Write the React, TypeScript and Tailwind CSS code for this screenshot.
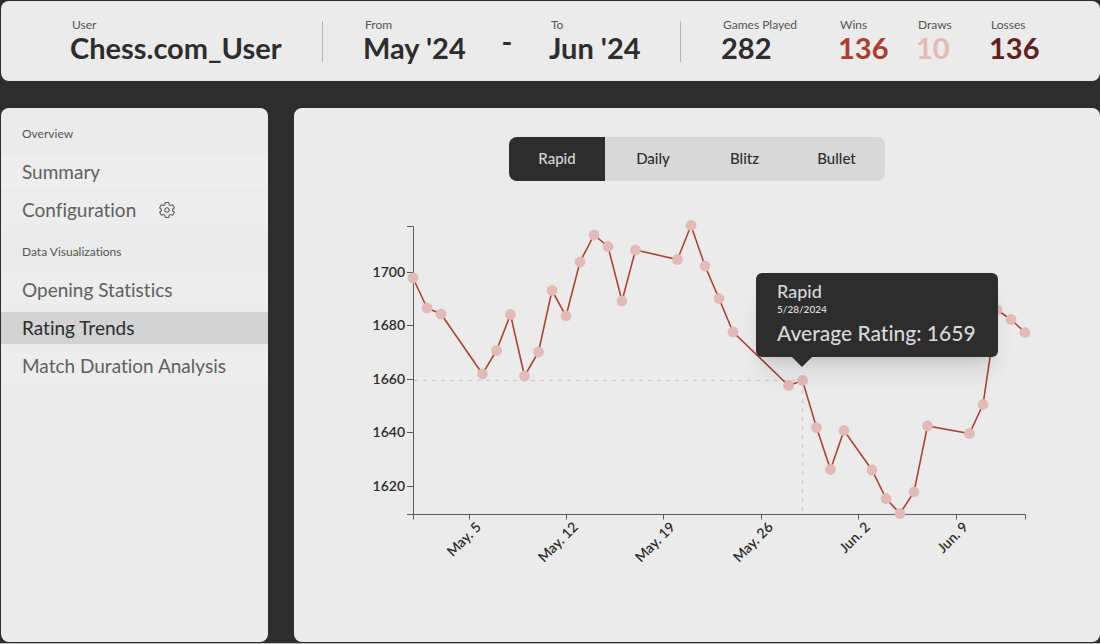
import { useState } from "react";
import { IoSettingsOutline } from "react-icons/io5";

type Stat = { label: string; value: string; width: string; color: string };

const STATS: Stat[] = [
  { label: "Games Played", value: "282", width: "w-[81px]", color: "text-[#2d2d2d]" },
  { label: "Wins", value: "136", width: "w-[42px]", color: "text-[#ac3d2f]" },
  { label: "Draws", value: "10", width: "w-[37px]", color: "text-[#e2bab7]" },
  { label: "Losses", value: "136", width: "w-[42px]", color: "text-[#5f211a]" },
];

const TABS = [
  { name: "Rapid", width: "w-24" },
  { name: "Daily", width: "w-24" },
  { name: "Blitz", width: "w-[87px]" },
  { name: "Bullet", width: "w-[97px]" },
];

const POINTS: [number, number][] = [
  [66, 78], [80, 108], [94, 114], [135.5, 174], [149.5, 150.5], [163.5, 114.5],
  [177.5, 176], [191.5, 152], [205, 90.5], [219, 116], [233, 62], [247, 35],
  [261, 46.5], [275, 101], [288.5, 50], [330.5, 59.5], [344, 25.5], [358, 66],
  [372, 98.5], [386, 132], [441.5, 185.5], [455.5, 180.5], [469.5, 227.5],
  [483.5, 269.5], [497, 230.5], [525, 270], [539, 298.5], [553, 313.5],
  [567, 292], [580.5, 226], [622.5, 233.5], [636, 204.5], [650, 110],
  [664, 119.5], [678, 132.5],
];

const Y_TICKS = [
  { y: 72, label: "1700" },
  { y: 125, label: "1680" },
  { y: 179, label: "1660" },
  { y: 232, label: "1640" },
  { y: 286, label: "1620" },
];

const X_TICKS = [
  { x: 122, label: "May. 5" },
  { x: 219, label: "May. 12" },
  { x: 316, label: "May. 19" },
  { x: 414, label: "May. 26" },
  { x: 511, label: "Jun. 2" },
  { x: 609, label: "Jun. 9" },
];

function HeaderField({ label, value, width, color }: Stat) {
  return (
    <div className={`${width} whitespace-nowrap pt-0.5`}>
      <dt className="pl-0.5 text-xs leading-3 text-[#555555]">{label}</dt>
      <dd className={`text-[29px] font-bold leading-[34px] ${color}`}>{value}</dd>
    </div>
  );
}

function Divider() {
  return <div className="h-[41px] w-px bg-[#b5b5b5]" />;
}

function NavHeading({ children }: { children: string }) {
  return <h2 className="px-[21px] text-xs leading-4 text-[#555555]">{children}</h2>;
}

function NavLink({ label, active, gear }: { label: string; active?: boolean; gear?: boolean }) {
  return (
    <a
      href="#"
      aria-current={active ? "page" : undefined}
      className={`flex h-8 items-center gap-[22px] whitespace-nowrap px-[21px] text-[19px] ${
        active ? "bg-[#d3d3d3] text-[#2d2d2d]" : "bg-[#ededed] text-[#606060]"
      }`}
    >
      {label}
      {gear && <IoSettingsOutline className="size-[18px]" />}
    </a>
  );
}

function RatingChart() {
  return (
    <div className="relative mx-auto mt-[19px] w-[700px]">
      <svg viewBox="0 0 700 400" className="block w-full" role="img" aria-label="Average rating by day">
        <g stroke="#cfcfcf" strokeWidth="1.5" strokeDasharray="4 5">
          <path d="M67 180.5H455" />
          <path d="M455.5 181V313" />
        </g>
        <g fill="none" stroke="#5a5a5a" strokeWidth="1">
          <path d="M60 26.5H66.5V314.5H60" />
          <path d="M66.5 319.5V314.5H678.5V319.5" />
          {Y_TICKS.map((t) => (
            <path key={t.label} d={`M60 ${t.y + 0.5}H66`} />
          ))}
          {X_TICKS.map((t) => (
            <path key={t.label} d={`M${t.x + 0.5} 314V319.5`} />
          ))}
        </g>
        <g className="fill-[#2d2d2d] text-sm font-semibold" textAnchor="end">
          {Y_TICKS.map((t) => (
            <text key={t.label} x="58" y={t.y + 5}>{t.label}</text>
          ))}
          {X_TICKS.map((t) => (
            <text key={t.label} transform={`translate(${t.x + 13} 328) rotate(-45)`}>{t.label}</text>
          ))}
        </g>
        <polyline
          points={POINTS.map((p) => p.join(",")).join(" ")}
          fill="none"
          stroke="#ac4435"
          strokeWidth="1.6"
        />
        <g fill="#e2bab7">
          {POINTS.map(([x, y]) => (
            <circle key={x} cx={x} cy={y} r="5.4" />
          ))}
        </g>
      </svg>
      <div
        role="tooltip"
        className="absolute left-[409px] top-[73px] flex h-[84px] w-[242px] flex-col justify-center whitespace-nowrap rounded-md bg-[#2d2d2d] pl-[21px] text-[#d8d8d8] shadow-xl"
      >
        <p className="text-lg font-medium leading-5">Rapid</p>
        <p className="text-[10px] font-semibold leading-4">5/28/2024</p>
        <p className="text-[21px] font-medium leading-8">Average Rating: 1659</p>
        <svg viewBox="0 0 20 10" className="absolute left-9 top-full h-2.5 w-5">
          <path d="M0 0H20L10 10Z" fill="#2d2d2d" />
        </svg>
      </div>
    </div>
  );
}

export default function App() {
  const [tab, setTab] = useState("Rapid");
  return (
    <div className="flex min-h-screen flex-col gap-[27px] border-b border-[#bdbdbd] bg-[#2d2d2d] pb-px pl-px pt-px font-['Lato',sans-serif] [font-variant-ligatures:none]">
      <header className="flex h-20 items-center justify-center rounded-lg bg-[#ebebeb]">
        <dl className="flex items-center gap-10">
          <HeaderField label="User" value="Chess.com_User" width="w-[212px]" color="text-[#2d2d2d]" />
          <Divider />
          <div className="flex items-center gap-9">
            <HeaderField label="From" value="May '24" width="w-[102px]" color="text-[#2d2d2d]" />
            <div className="w-3 text-center text-[29px] font-bold leading-[34px] text-[#2d2d2d]">-</div>
            <HeaderField label="To" value="Jun '24" width="w-[91px]" color="text-[#2d2d2d]" />
          </div>
          <Divider />
          <div className="flex items-center gap-9">
            {STATS.map((s) => (
              <HeaderField key={s.label} {...s} />
            ))}
          </div>
        </dl>
      </header>
      <div className="flex grow gap-[26px]">
        <nav className="w-[267px] shrink-0 rounded-lg bg-[#ebebeb] pt-[18px]">
          <NavHeading>Overview</NavHeading>
          <div className="mb-[18px] mt-3.5 flex flex-col gap-1.5">
            <NavLink label="Summary" />
            <NavLink label="Configuration" gear />
          </div>
          <NavHeading>Data Visualizations</NavHeading>
          <div className="mt-3.5 flex flex-col gap-1.5">
            <NavLink label="Opening Statistics" />
            <NavLink label="Rating Trends" active />
            <NavLink label="Match Duration Analysis" />
          </div>
        </nav>
        <main className="min-w-0 grow rounded-lg bg-[#ebebeb] pt-[29px]">
          <div className="mx-auto flex w-fit overflow-hidden rounded-lg bg-[#d8d8d8]">
            {TABS.map((t) => (
              <button
                key={t.name}
                type="button"
                onClick={() => setTab(t.name)}
                className={`h-11 pb-0.5 text-[15px] font-medium ${t.width} ${
                  tab === t.name ? "bg-[#2d2d2d] text-[#d8d8d8]" : "text-[#2d2d2d]"
                }`}
              >
                {t.name}
              </button>
            ))}
          </div>
          <RatingChart />
        </main>
      </div>
    </div>
  );
}
